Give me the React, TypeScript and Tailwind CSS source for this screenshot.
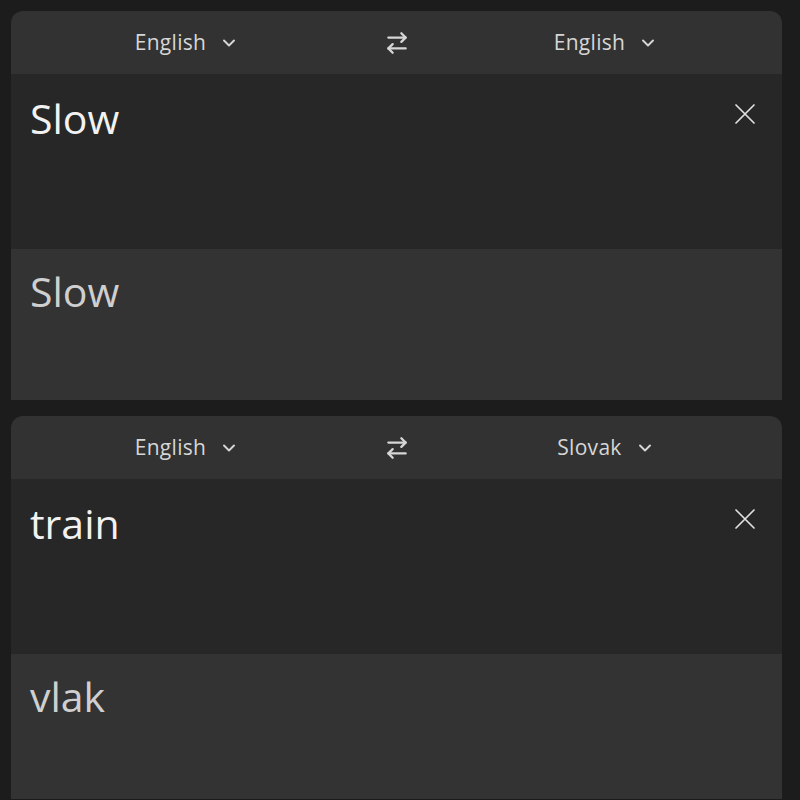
import { ArrowRightLeft, ChevronDown } from "lucide-react";

type Card = { from: string; to: string; input: string; output: string };

const cards: Card[] = [
  { from: "English", to: "English", input: "Slow", output: "Slow" },
  { from: "English", to: "Slovak", input: "train", output: "vlak" },
];

function LangButton({ label }: { label: string }) {
  return (
    <div className="flex-1 flex items-center justify-center">
      <span className="text-[21px] text-[#d6d6d6] tracking-[0.3px]">{label}</span>
      <ChevronDown className="w-[20px] h-[20px] ml-[13px] text-[#d6d6d6]" strokeWidth={2.3} />
    </div>
  );
}

function ClearIcon() {
  return (
    <svg width="22" height="22" viewBox="0 0 22 22" className="mt-[9px] text-[#e0e0e0]">
      <path d="M2 2L20 20M20 2L2 20" stroke="currentColor" strokeWidth="1.7" strokeLinecap="round" />
    </svg>
  );
}

function TranslateCard({ card, last }: { card: Card; last?: boolean }) {
  return (
    <section className="rounded-t-[12px] overflow-hidden">
      <div className="h-[63px] bg-[#323232] flex items-center">
        <LangButton label={card.from} />
        <div className="w-[67px] flex items-center justify-center">
          <ArrowRightLeft className="w-[26px] h-[26px] text-[#d6d6d6]" strokeWidth={2.1} />
        </div>
        <LangButton label={card.to} />
      </div>
      <div className="h-[175px] bg-[#272727] flex items-start justify-between pl-[19px] pr-[26px] pt-[20px]">
        <p className="text-[41px] leading-[48px] text-[#f2f2f2]">{card.input}</p>
        <ClearIcon />
      </div>
      <div className={`${last ? "h-[145px]" : "h-[151px]"} bg-[#333333] pl-[19px] pt-[18px]`}>
        <p className="text-[41px] leading-[48px] text-[#cfcfcf]">{card.output}</p>
      </div>
    </section>
  );
}

export default function App() {
  return (
    <div
      className="w-[800px] h-[800px] overflow-hidden bg-[#1c1c1c] pl-[11px] pr-[18px] pt-[11px] flex flex-col gap-[16px]"
      style={{ fontFamily: "'Open Sans', 'Noto Sans', sans-serif" }}
    >
      {cards.map((c, i) => (
        <TranslateCard key={i} card={c} last={i === cards.length - 1} />
      ))}
    </div>
  );
}
